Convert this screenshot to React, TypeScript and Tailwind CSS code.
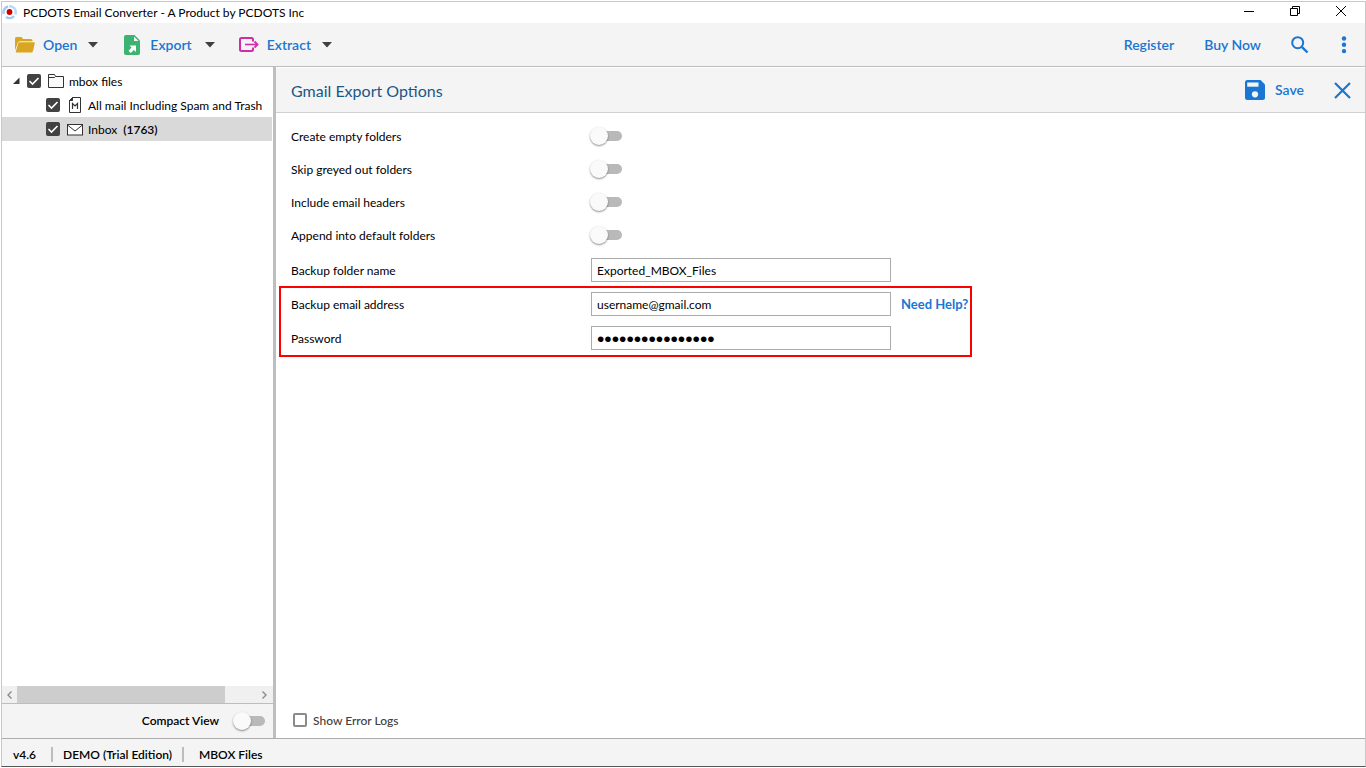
import React, { useState } from 'react';

const FolderOpenIcon = () => (
  <svg width="20" height="16" viewBox="0 0 20 16" fill="#daa520">
    <path d="M0 13.500V1.500Q0 0 1.500 0H6.500L8 2H16Q17.500 2 17.500 3.500V4.200H5Q3.300 4.200 2.800 5.800Z" />
    <path d="M4.300 5.300H19Q20 5.300 19.800 6.300L18 14Q17.600 15.500 16.200 15.500H1.200Q0.600 15.500 0.800 14.800L3.200 6.200Q3.500 5.300 4.300 5.300Z" />
  </svg>
);

const ExportIcon = () => (
  <svg width="16" height="20" viewBox="0 0 16 20">
    <path d="M2 0H10.500L16 5.500V18Q16 20 14 20H2Q0 20 0 18V2Q0 0 2 0Z" fill="#3cb371" />
    <path d="M10 1.500V6H14.500Z" fill="#f4f4f4" />
    <path d="M5.500 10.500H12V17L9.900 14.900L6.800 18L4.500 15.700L7.600 12.600Z" fill="#fff" />
  </svg>
);

const ExtractIcon = () => (
  <svg width="20" height="16" viewBox="0 0 20 16" fill="none" stroke="#d02ba8" strokeWidth="2">
    <path d="M14 4.500V2.500Q14 1 12.500 1H2.500Q1 1 1 2.500V12.500Q1 14 2.500 14H12.500Q14 14 14 12.500V10.500" />
    <path d="M6 7.500H18" strokeWidth="1.600" />
    <path d="M15.500 4.500L18.500 7.500L15.500 10.500" strokeWidth="1.800" />
  </svg>
);

const SearchIcon = () => (
  <svg width="18" height="18" viewBox="0 0 18 18" fill="none" stroke="#1976d2" strokeWidth="2">
    <circle cx="6.700" cy="6.700" r="5.500" />
    <path d="M10.800 10.800L16.500 16.500" strokeWidth="2.400" />
  </svg>
);

const MoreIcon = () => (
  <svg width="6" height="18" viewBox="0 0 6 18" fill="#1976d2">
    <circle cx="3" cy="2.500" r="2.200" />
    <circle cx="3" cy="8.800" r="2.200" />
    <circle cx="3" cy="15.100" r="2.200" />
  </svg>
);

const SaveIcon = () => (
  <svg width="20" height="20" viewBox="0 0 20 20">
    <path d="M2.500 0H15.500L20 4.500V17.500Q20 20 17.500 20H2.500Q0 20 0 17.500V2.500Q0 0 2.500 0Z" fill="#1976d2" />
    <path d="M2.200 2.500H13.500V6.700H2.200Z" fill="#f4f4f4" />
    <circle cx="10" cy="14.300" r="3.100" fill="#f4f4f4" />
  </svg>
);

const CheckedIcon = () => (
  <svg className="pointer-events-none col-start-1 row-start-1" width="14" height="14" viewBox="0 0 14 14" fill="none" stroke="#fff" strokeWidth="1.600">
    <path d="M2.500 7L5.500 10L11.500 4" />
  </svg>
);

const FolderIcon = () => (
  <svg width="16" height="14" viewBox="0 0 16 14" fill="#fafafa" stroke="#333">
    <path d="M0.500 13.500V0.500H6.500L7.500 2.500H15.500V13.500Z" />
    <path d="M0.500 3.500H6.500L7.500 2.500" />
  </svg>
);

const MboxIcon = () => (
  <svg width="12" height="16" viewBox="0 0 12 16" fill="none" stroke="#333">
    <path d="M3.500 0.500H11.500V15.500H0.500V3.500Z" fill="#fff" />
    <path d="M0.500 3.500H3.500V0.500Z" fill="#333" />
    <path d="M3.500 12V6.500L6 9L8.500 6.500V12" strokeWidth="1.200" />
  </svg>
);

const MailIcon = () => (
  <svg width="16" height="12" viewBox="0 0 16 12" fill="#fff" stroke="#333">
    <rect x="0.500" y="0.500" width="15" height="10.500" />
    <path d="M0.500 1L8 7L15.500 1" fill="none" />
  </svg>
);

const Caret = () => (
  <svg width="10" height="6" viewBox="0 0 10 6" fill="#404040">
    <path d="M0 0H10L5 5.500Z" />
  </svg>
);

const Switch = ({ id }: { id: string }) => (
  <input
    id={id}
    type="checkbox"
    role="switch"
    className="flex h-[18px] w-8 shrink-0 cursor-pointer appearance-none items-center before:z-10 before:size-[18px] before:shrink-0 before:rounded-full before:bg-[#fafafa] before:shadow-[0_1px_2px_rgba(0,0,0,0.45)] before:content-[''] after:-ml-1 after:h-[10px] after:w-[18px] after:shrink-0 after:rounded-r-full after:bg-[#b9b9b9] after:content-['']"
  />
);

const TreeCheckbox = ({ label }: { label: string }) => {
  const [checked, setChecked] = useState(true);
  return (
    <span className="grid shrink-0 place-items-center">
      <input
        type="checkbox"
        aria-label={label}
        checked={checked}
        onChange={() => setChecked(!checked)}
        className="col-start-1 row-start-1 size-3.5 appearance-none rounded-xs border-2 border-[#424242] checked:bg-[#424242]"
      />
      {checked && <CheckedIcon />}
    </span>
  );
};

const menus = [
  { label: 'Open', icon: <FolderOpenIcon />, className: 'gap-2 pr-[26px]' },
  { label: 'Export', icon: <ExportIcon />, className: 'gap-2.5 pr-6' },
  { label: 'Extract', icon: <ExtractIcon />, className: 'gap-2' },
];

const toggles = [
  { id: 'create-empty', label: 'Create empty folders' },
  { id: 'skip-greyed', label: 'Skip greyed out folders' },
  { id: 'include-headers', label: 'Include email headers' },
  { id: 'append-default', label: 'Append into default folders' },
];

const TitleBar = () => (
  <header className="flex h-[21px] shrink-0 items-center justify-between bg-white pr-[19px]">
    <div className="flex items-center gap-1.5 pb-0.5">
      <svg width="15" height="16" viewBox="0 0 15 16" fill="none" strokeWidth="2.500">
        <path d="M6 2.500A5.800 5.800 0 0 0 1.800 10" stroke="#9ccbf5" />
        <path d="M4 13A6 6 0 0 0 12 12" stroke="#9ccbf5" />
        <path d="M7 2.300A6 6 0 0 1 13.300 10.500" stroke="#b9dcf8" />
        <circle cx="7.500" cy="8" r="2.900" fill="#d40000" />
      </svg>
      <span className="pt-0.5">PCDOTS Email Converter - A Product by PCDOTS Inc</span>
    </div>
    <div className="flex items-center gap-9 pb-1">
      <button aria-label="Minimize">
        <svg width="10" height="10" stroke="#000"><path d="M0 5.500H10" /></svg>
      </button>
      <button aria-label="Restore">
        <svg width="10" height="10" fill="none" stroke="#000">
          <path d="M0.500 2.500H7.500V9.500H0.500ZM2.500 2.500V0.500H9.500V7.500H7.500" />
        </svg>
      </button>
      <button aria-label="Close window">
        <svg width="10" height="10" stroke="#000"><path d="M0 0L10 10M10 0L0 10" /></svg>
      </button>
    </div>
  </header>
);

const Toolbar = () => (
  <nav className="flex h-11 shrink-0 items-center justify-between border-b border-[#bdbdbd] bg-[#f4f4f4] pl-[13px] pr-[18px] text-sm font-semibold text-[#1976d2]">
    <div className="flex items-center">
      {menus.map((menu) => (
        <button key={menu.label} className={`flex items-center ${menu.className}`}>
          {menu.icon}
          <span>{menu.label}</span>
          <span className="pl-[3px]"><Caret /></span>
        </button>
      ))}
    </div>
    <div className="flex items-center">
      <a href="#register" className="mr-[30px]">Register</a>
      <a href="#buy" className="mr-[30px]">Buy Now</a>
      <button aria-label="Search" className="mr-8"><SearchIcon /></button>
      <button aria-label="More"><MoreIcon /></button>
    </div>
  </nav>
);

const Sidebar = () => (
  <aside className="flex w-[274px] shrink-0 flex-col border-r-[3px] border-[#bebebe]">
    <ul className="flex-1 pt-0.5 pr-px">
      <li className="flex h-6 items-center pl-2.5">
        <svg width="8" height="8" className="mr-[7px]" fill="#333"><path d="M7.500 0.500V7H1Z" /></svg>
        <TreeCheckbox label="mbox files" />
        <span className="mr-[5px] ml-[7px]"><FolderIcon /></span>
        <span className="pt-0.5">mbox files</span>
      </li>
      <li className="flex h-6 items-center pl-11 whitespace-nowrap">
        <TreeCheckbox label="All mail Including Spam and Trash" />
        <span className="mr-[7px] ml-[9px]"><MboxIcon /></span>
        <span className="pt-0.5">All mail Including Spam and Trash</span>
      </li>
      <li className="flex h-6 items-center bg-[#d9d9d9] pl-11">
        <TreeCheckbox label="Inbox" />
        <span className="mr-[5px] ml-[7px] pt-px"><MailIcon /></span>
        <span className="pt-0.5">Inbox</span>
        <span className="pt-0.5 pl-1.5 font-semibold">(1763)</span>
      </li>
    </ul>
    <div className="flex h-[17px] shrink-0 bg-[#f0f0f0]">
      <button aria-label="Scroll left" className="grid w-[15px] place-items-center">
        <svg width="5" height="8" fill="none" stroke="#8a8a8a" strokeWidth="1.400"><path d="M4.500 0.500L1 4L4.500 7.500" /></svg>
      </button>
      <div className="flex-1"><div className="h-full w-[87%] bg-[#cdcdcd]" /></div>
      <button aria-label="Scroll right" className="grid w-[17px] place-items-center">
        <svg width="5" height="8" fill="none" stroke="#8a8a8a" strokeWidth="1.400"><path d="M0.500 0.500L4 4L0.500 7.500" /></svg>
      </button>
    </div>
    <div className="flex h-[35px] shrink-0 items-center justify-end gap-3.5 border-t border-[#bdbdbd] bg-[#f4f4f4] pr-2 pb-px">
      <label htmlFor="compact" className="font-semibold">Compact View</label>
      <Switch id="compact" />
    </div>
  </aside>
);

const Field = ({ id, label, type = 'text', value }: { id: string; label: string; type?: string; value: string }) => (
  <div className="flex h-6 items-center">
    <label htmlFor={id} className="w-[300px] pt-0.5">{label}</label>
    <input
      id={id}
      type={type}
      defaultValue={value}
      className={`h-6 w-[300px] border border-[#ababab] bg-white px-[5px] ${type === 'password' ? "pt-0.5 font-['Liberation_Sans',sans-serif] text-[21px]" : ''}`}
    />
  </div>
);

const ExportOptions = () => (
  <main className="flex min-w-0 flex-1 flex-col">
    <div className="mt-px flex h-[45px] shrink-0 items-center justify-between border-b border-[#d0d0d0] bg-[#f4f4f4] pr-3.5 pl-[15px]">
      <h1 className="pt-0.5 text-base text-[#1a5789]">Gmail Export Options</h1>
      <div className="flex items-center gap-[30px] text-[#1976d2]">
        <button className="flex items-center gap-2.5 text-sm font-semibold">
          <SaveIcon />
          Save
        </button>
        <button aria-label="Close">
          <svg width="17" height="17" fill="none" stroke="#1976d2" strokeWidth="2.200"><path d="M1 1L16 16M16 1L1 16" /></svg>
        </button>
      </div>
    </div>
    <form className="flex-1 pt-1.5">
      <div className="pl-[15px]">
        {toggles.map((toggle) => (
          <div key={toggle.id} className="flex h-[33px] items-center">
            <label htmlFor={toggle.id} className="w-[299px] pt-0.5">{toggle.label}</label>
            <Switch id={toggle.id} />
          </div>
        ))}
      </div>
      <div className="mt-[7px] pl-[15px]">
        <Field id="folder" label="Backup folder name" value="Exported_MBOX_Files" />
      </div>
      <div className="mt-1 ml-[3px] w-[693px] border-2 border-[#f00] pt-1 pb-[5px] pl-2.5">
        <div className="mb-2.5 flex items-center gap-2.5">
          <Field id="email" label="Backup email address" value="username@gmail.com" />
          <a href="#help" className="pt-0.5 text-[13px] font-bold whitespace-nowrap text-[#1976d2]">Need Help?</a>
        </div>
        <Field id="password" label="Password" type="password" value="abcdefghijklmnop" />
      </div>
    </form>
    <label className="flex h-9 shrink-0 items-center gap-1.5 pb-px pl-[17px] font-medium text-[#404040]">
      <input type="checkbox" className="size-3.5 appearance-none rounded-xs border-2 border-[#8a8a8a] bg-white checked:bg-[#424242]" />
      <span className="pt-0.5">Show Error Logs</span>
    </label>
  </main>
);

const App = () => (
  <div className="h-screen bg-white pt-px pb-px pl-px font-[Lato,sans-serif] text-xs text-black">
    <div className="flex h-full flex-col border border-b-[#555] border-[#c8c8c8]">
      <TitleBar />
      <Toolbar />
      <div className="flex min-h-0 flex-1">
        <Sidebar />
        <ExportOptions />
      </div>
      <footer className="flex h-7 shrink-0 items-center border-t border-[#adadad] bg-[#f4f4f4] pt-1 pl-[11px] font-semibold">
        <span>v4.6</span>
        <span className="ml-[15px] border-l-2 border-[#bdbdbd] pl-2.5 leading-[15px]">DEMO (Trial Edition)</span>
        <span className="ml-2.5 border-l-2 border-[#bdbdbd] pl-[15px] leading-[15px]">MBOX Files</span>
      </footer>
    </div>
  </div>
);

export default App;
